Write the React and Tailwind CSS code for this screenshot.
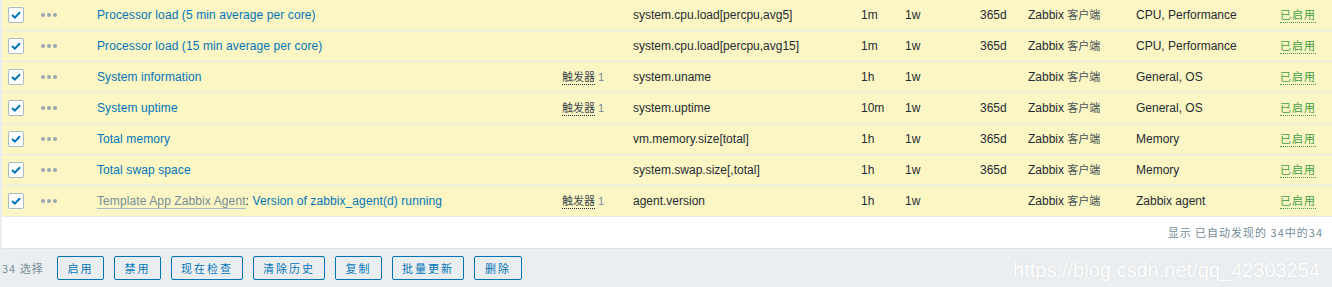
import React from "react";

const rows = [
  { name: "Processor load (5 min average per core)", key: "system.cpu.load[percpu,avg5]", interval: "1m", history: "1w", trends: "365d", apps: "CPU, Performance" },
  { name: "Processor load (15 min average per core)", key: "system.cpu.load[percpu,avg15]", interval: "1m", history: "1w", trends: "365d", apps: "CPU, Performance" },
  { name: "System information", trig: true, key: "system.uname", interval: "1h", history: "1w", trends: "", apps: "General, OS" },
  { name: "System uptime", trig: true, key: "system.uptime", interval: "10m", history: "1w", trends: "365d", apps: "General, OS" },
  { name: "Total memory", key: "vm.memory.size[total]", interval: "1h", history: "1w", trends: "365d", apps: "Memory" },
  { name: "Total swap space", key: "system.swap.size[,total]", interval: "1h", history: "1w", trends: "365d", apps: "Memory" },
  { name: "Version of zabbix_agent(d) running", template: "Template App Zabbix Agent", trig: true, key: "agent.version", interval: "1h", history: "1w", trends: "", apps: "Zabbix agent" },
];

const FONT = { fontFamily: '"Liberation Sans", Arial, "Noto Sans CJK SC", sans-serif' };
const CJK = { fontFamily: '"Noto Sans CJK SC", sans-serif' };

function Check() {
  return (
    <div className="w-4 h-4 bg-white border border-[#acbbc2] rounded-[2px] flex items-center justify-center">
      <svg width="10" height="8" viewBox="0 0 10 8">
        <path d="M1 4 L3.8 6.6 L9 1.2" fill="none" stroke="#0275b8" strokeWidth="2" />
      </svg>
    </div>
  );
}

function Dots() {
  return (
    <div className="flex gap-[2px]">
      <span className="w-1 h-1 rounded-full bg-[#9aa7ae]" />
      <span className="w-1 h-1 rounded-full bg-[#9aa7ae]" />
      <span className="w-1 h-1 rounded-full bg-[#9aa7ae]" />
    </div>
  );
}

const buttons = [
  ["启用", "w-[47px]"],
  ["禁用", "w-[47px]"],
  ["现在检查", "w-[72px]"],
  ["清除历史", "w-[72px]"],
  ["复制", "w-[47px]"],
  ["批量更新", "w-[72px]"],
  ["删除", "w-[48px]"],
];

export default function App() {
  return (
    <div className="w-[1332px] h-[287px] bg-[#ebeef0] text-[12px] text-[#1f2c33] overflow-hidden" style={FONT}>
      <div className="ml-[2px] bg-white border-b border-[#dfe4e7]">
        {rows.map((r, i) => (
          <div key={i} className="flex items-center h-[31px] bg-[#fbf6c3] border-b border-[#e6eaec]">
            <div className="w-[39px] pl-[6px] flex items-center"><Check /></div>
            <div className="w-[56px] flex items-center"><Dots /></div>
            <div className="w-[465px] whitespace-nowrap tracking-[0.1px]">
              {r.template && (
                <>
                  <span className="text-[#768d99] border-b border-[#acbbc2]">{r.template}</span>
                  <span>: </span>
                </>
              )}
              <span className="text-[#0275b8]">{r.name}</span>
            </div>
            <div className="w-[71px] whitespace-nowrap text-[11px]">
              {r.trig && (
                <>
                  <span className="text-[#3b4850] border-b border-dotted border-[#1f2c33]" style={CJK}>触发器</span>
                  <span className="text-[#768d99] ml-[3px]">1</span>
                </>
              )}
            </div>
            <div className="w-[228px] whitespace-nowrap">{r.key}</div>
            <div className="w-[44px]">{r.interval}</div>
            <div className="w-[75px]">{r.history}</div>
            <div className="w-[48px]">{r.trends}</div>
            <div className="w-[108px] whitespace-nowrap">
              Zabbix <span className="text-[11px] text-[#4a5459]" style={CJK}>客户端</span>
            </div>
            <div className="w-[144px] whitespace-nowrap">{r.apps}</div>
            <div className="whitespace-nowrap">
              <span className="text-[11px] text-[#429e47] border-b border-dotted border-[#429e47] tracking-[1px]" style={CJK}>已启用</span>
            </div>
          </div>
        ))}
        <div className="h-[31px] flex items-center justify-end pr-[9px] text-[11px] text-[#768d99] tracking-[1px]" style={{ fontFamily: '"Noto Sans CJK SC", "Liberation Sans", sans-serif' }}>
          显示 已自动发现的 34中的34
        </div>
      </div>
      <div className="flex items-center h-[38px] pl-[2px]">
        <span className="text-[11px] text-[#768d99] w-[55px] tracking-[1px]" style={CJK}>34 选择</span>
        <div className="flex gap-[10px]">
          {buttons.map(([t, w]) => (
            <button
              key={t}
              className={`${w} h-[24px] border border-[#0275b8] rounded-[2px] text-[#0275b8] text-[11px] tracking-[2px] flex items-center justify-center`}
              style={CJK}
            >
              {t}
            </button>
          ))}
        </div>
        <div className="ml-auto mr-[12px] mt-[4px] text-[20px] text-white" style={{ fontFamily: '"Liberation Sans", sans-serif', textShadow: "0 0 1px #d4d9dc, 0 0 1px #d4d9dc" }}>
          https://blog.csdn.net/qq_42303254
        </div>
      </div>
    </div>
  );
}
